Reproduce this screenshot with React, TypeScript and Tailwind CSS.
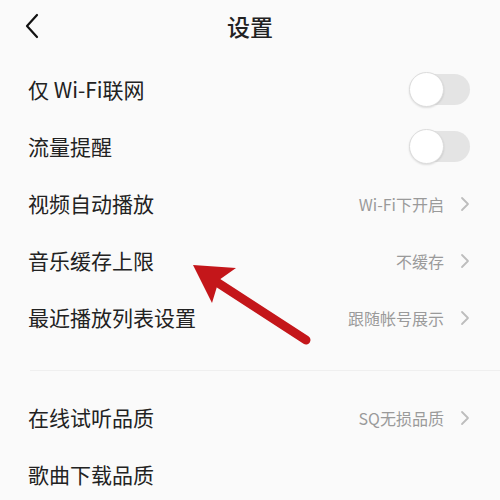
import React from 'react';

interface Row {
  label: string;
  value?: string;
  toggle?: boolean;
}

const firstGroup: Row[] = [
  { label: '仅 Wi-Fi联网', toggle: true },
  { label: '流量提醒', toggle: true },
  { label: '视频自动播放', value: 'Wi-Fi下开启' },
  { label: '音乐缓存上限', value: '不缓存' },
  { label: '最近播放列表设置', value: '跟随帐号展示' },
];

const secondGroup: Row[] = [
  { label: '在线试听品质', value: 'SQ无损品质' },
  { label: '歌曲下载品质' },
];

function Toggle() {
  return (
    <div className="relative w-[61px] h-[35px] flex items-center">
      <div className="absolute left-[4px] right-0 h-[31px] rounded-full bg-[#e4e4e4]" />
      <div className="absolute left-0 w-[35px] h-[35px] rounded-full bg-white border border-[#dcdcdc] shadow-[0_1px_2px_rgba(0,0,0,0.12)]" />
    </div>
  );
}

function Chevron() {
  return (
    <svg width="10" height="16" viewBox="0 0 10 16" className="ml-[16px]">
      <path d="M2 2 L8 8 L2 14" fill="none" stroke="#bdbdbd" strokeWidth="1.8" strokeLinecap="round" strokeLinejoin="round" />
    </svg>
  );
}

function SettingRow({ row }: { row: Row }) {
  return (
    <div className="h-[57px] flex items-center justify-between pl-[28px] pr-[30px]">
      <span className="text-[21px] text-[#222]">{row.label}</span>
      {row.toggle && <Toggle />}
      {row.value && (
        <div className="flex items-center">
          <span className="text-[16px] text-[#9a9a9a]">{row.value}</span>
          <Chevron />
        </div>
      )}
    </div>
  );
}

export default function App() {
  return (
    <div
      className="relative w-[500px] h-[500px] overflow-hidden bg-[#fafafa]"
      style={{ fontFamily: '"Noto Sans CJK SC", "Noto Sans", sans-serif' }}
    >
      {/* Header */}
      <div className="relative h-[52px] flex items-center justify-center">
        <svg width="16" height="26" viewBox="0 0 16 26" className="absolute left-[24px] top-[13px]">
          <path d="M13 2 L3 13 L13 24" fill="none" stroke="#111" strokeWidth="2.2" strokeLinecap="round" strokeLinejoin="round" />
        </svg>
        <span className="text-[23px] font-medium text-[#222]">设置</span>
      </div>

      <div className="pt-[9px]">
        {firstGroup.map((row) => (
          <SettingRow key={row.label} row={row} />
        ))}
      </div>

      <div className="mt-[24px] ml-[30px] h-px bg-[#efefef]" />

      <div className="pt-[18px]">
        {secondGroup.map((row) => (
          <SettingRow key={row.label} row={row} />
        ))}
      </div>

      {/* Red annotation arrow */}
      <svg className="absolute left-0 top-0 pointer-events-none" width="500" height="500" viewBox="0 0 500 500">
        <line x1="212" y1="279" x2="306" y2="340" stroke="#c4161a" strokeWidth="9" strokeLinecap="round" />
        <polygon points="193,265 236,268 219,280 212,303" fill="#c4161a" />
      </svg>
    </div>
  );
}
